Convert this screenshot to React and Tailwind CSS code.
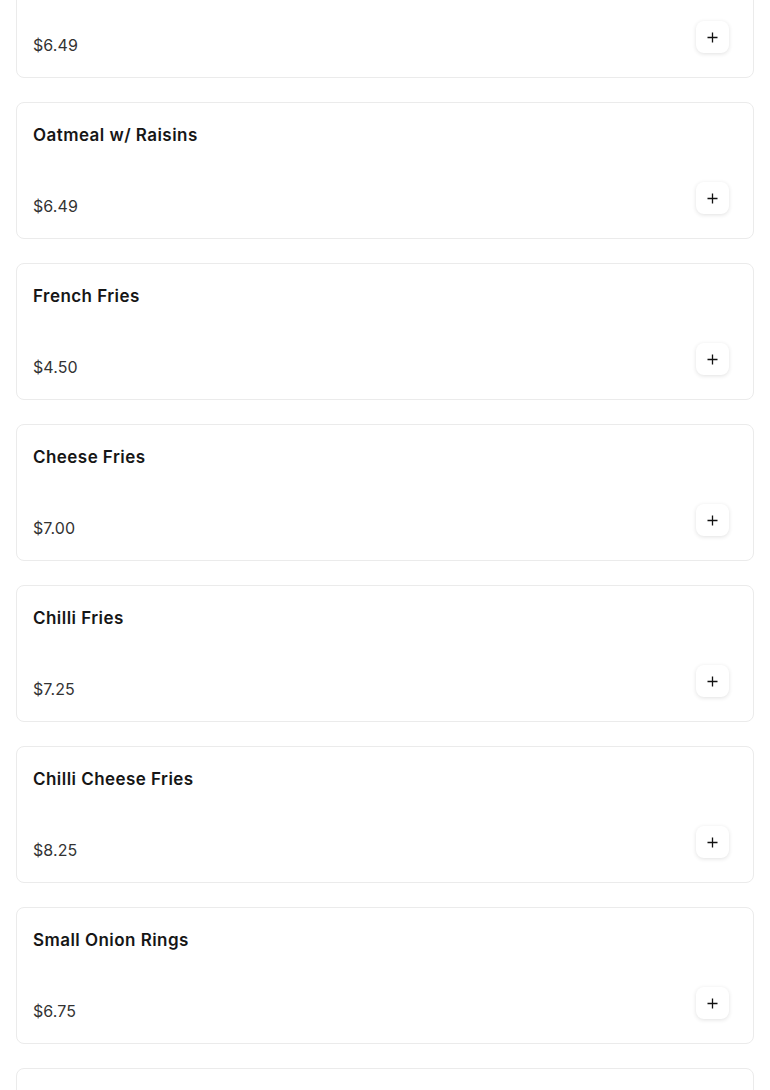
import React from "react";

const items = [
  ["Oatmeal", "$6.49"],
  ["Oatmeal w/ Raisins", "$6.49"],
  ["French Fries", "$4.50"],
  ["Cheese Fries", "$7.00"],
  ["Chilli Fries", "$7.25"],
  ["Chilli Cheese Fries", "$8.25"],
  ["Small Onion Rings", "$6.75"],
  ["Large Onion Rings", "$8.75"],
];

function PlusIcon() {
  return (
    <svg width="11" height="11" viewBox="0 0 11 11" fill="none">
      <path d="M5.5 0.5v10M0.5 5.5h10" stroke="#111" strokeWidth="1.3" />
    </svg>
  );
}

export default function App() {
  return (
    <div className="bg-white h-[1090px] overflow-hidden" style={{ fontFamily: "Inter, 'Noto Sans', sans-serif" }}>
      <div className="px-4 -mt-[59px] flex flex-col gap-6">
        {items.map(([name, price]) => (
          <div key={name} className="h-[137px] border border-[#ebebeb] rounded-lg bg-white px-4 flex flex-col">
            <div className="pt-[20px] leading-6 text-[17px] font-semibold tracking-[0.45px] text-[#161616]">{name}</div>
            <div className="flex justify-between items-start mt-[35px]">
              <div className="mt-[12px] leading-6 text-[16px] tracking-[0.1px] text-[#333]">{price}</div>
              <button className="w-[33px] h-[32px] mr-[8px] rounded-lg bg-white shadow-[0_1px_4px_rgba(0,0,0,0.12)] flex items-center justify-center">
                <PlusIcon />
              </button>
            </div>
          </div>
        ))}
      </div>
    </div>
  );
}
